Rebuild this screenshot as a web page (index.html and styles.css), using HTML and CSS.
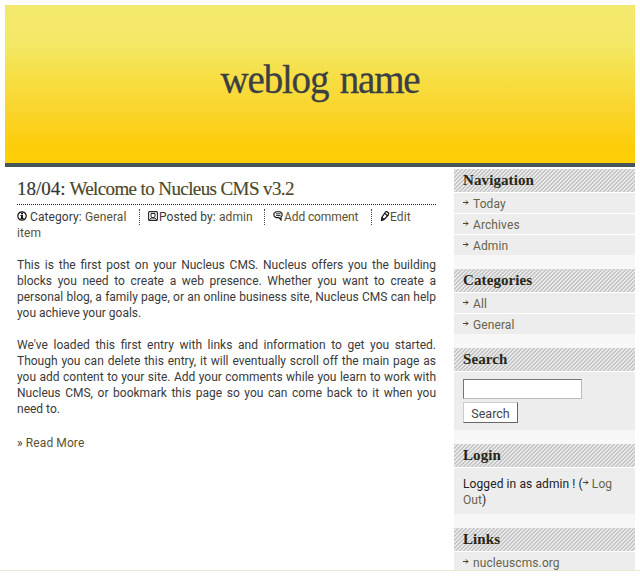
FILE: index.html
```
<!DOCTYPE html>
<html lang="en">
<head>
<meta charset="utf-8">
<title>weblog name</title>
<link rel="stylesheet" href="styles.css">
</head>
<body>
<svg class="defs" width="0" height="0">
  <symbol id="arrow" viewBox="0 0 6 5"><path d="M0 2.5h5M3 .5l2 2-2 2" fill="none" stroke="currentColor"/></symbol>
</svg>
<div class="page">
  <header class="banner"><h1>weblog name</h1></header>
  <div class="columns">
    <main class="content">
      <h2 class="title"><span>18/04:</span> <a>Welcome to Nucleus CMS v3.2</a></h2>
      <div class="meta">
        <span class="m1"><svg class="ic" viewBox="0 0 10 10"><circle cx="5" cy="5" r="4.2" fill="none" stroke="#111" stroke-width="1.2"/><path d="M4 1.8h2v1.5H4zM3.5 4H6v3.2h1V8H3.3v-.8H4V5h-.5z" fill="#111"/></svg><span>Category: <a>General</a></span></span>
        <span class="m2"><svg class="ic" viewBox="0 0 10 10"><rect x=".6" y=".6" width="8.8" height="8.8" rx="1" fill="none" stroke="#222" stroke-width="1.1"/><path d="M3 2.5h4v3.2L6 6.5H4l-1-.8zM1.5 8.8L3 7h4l1.5 1.8" fill="none" stroke="#222"/></svg><span>Posted by: <a>admin</a></span></span>
        <span class="m3"><svg class="ic" viewBox="0 0 10 10"><path d="M3 .7h4l2 1.5v2.6L8 6v3L6 6.6H3L1 5V2.2z" fill="none" stroke="#111" stroke-width="1.1"/><path d="M3 2.8h4.5M3 4.6h4.5" stroke="#111" stroke-width=".9"/></svg><a class="add">Add comment</a></span>
        <span class="m4"><svg class="ic" viewBox="0 0 10 10"><path d="M5.5 1l1.2-.5 2 1.5-.5 2.2-4 4.3L1.5 9.5l.3-3zM4.8 2.2l2.4 2.3M1.8 6.5l2.3 1.9" fill="none" stroke="#111" stroke-width="1.2"/><path d="M1.5 7.5v2h2z" fill="#111"/></svg><a class="ed">Edit</a></span>
        <a class="item">item</a>
      </div>
      <p><span>This is the first post on your Nucleus CMS. Nucleus offers you the building</span><span>blocks you need to create a web presence. Whether you want to create a</span><span>personal blog, a family page, or an online business site, Nucleus CMS can help</span><span class="end">you achieve your goals.</span></p>
      <p><span>We've loaded this first entry with links and information to get you started.</span><span>Though you can delete this entry, it will eventually scroll off the main page as</span><span>you add content to your site. Add your comments while you learn to work with</span><span>Nucleus CMS, or bookmark this page so you can come back to it when you</span><span class="end">need to.</span></p>
      <div class="more">» <a>Read More</a></div>
    </main>
    <aside class="side">
      <section><h3>Navigation</h3><ul><li><svg><use href="#arrow"/></svg><a>Today</a></li><li><svg><use href="#arrow"/></svg><a>Archives</a></li><li><svg><use href="#arrow"/></svg><a>Admin</a></li></ul></section>
      <section><h3>Categories</h3><ul><li><svg><use href="#arrow"/></svg><a>All</a></li><li><svg><use href="#arrow"/></svg><a>General</a></li></ul></section>
      <section><h3>Search</h3><form class="search"><input type="text" aria-label="Search"><button type="button">Search</button></form></section>
      <section><h3>Login</h3><div class="login">Logged in as admin ! (<svg><use href="#arrow"/></svg><a>Log<br>Out</a>)</div></section>
      <section><h3>Links</h3><ul><li><svg><use href="#arrow"/></svg><a>nucleuscms.org</a></li></ul></section>
    </aside>
  </div>
</div>
</body>
</html>
```
FILE: styles.css
```
* { box-sizing: border-box; }
body { margin: 0; background: #fff; color: #3a3a3a; font: 12px/16px Roboto, "Liberation Sans", sans-serif; letter-spacing: .1px; }
.defs { display: block; height: 0; }
h1, h2, h3, p, ul { margin: 0; padding: 0; }
a { color: #575133; }
.page { height: 571px; padding: 5px 5px 0; overflow: hidden; border-bottom: 1px solid #ebe8d5; }
.banner { height: 162px; border-bottom: 4px solid #475759; background: linear-gradient(#f3e96e 0%, #f3e867 24%, #f7df45 45%, #fad42a 68%, #fdcd09 90%, #ffcf06 100%); text-align: center; }
h1 { padding-top: 50px; font: 400 39px/50px "Liberation Serif", serif; letter-spacing: -1.2px; word-spacing: 3px; color: #3b3f45; -webkit-text-stroke: .3px; }
.columns { display: flex; justify-content: space-between; }
.content { width: 419px; margin-left: 12px; }
.title { height: 38px; padding-top: 9px; font: 400 19px/25px "Liberation Serif", serif; letter-spacing: -.6px; color: #333; border-bottom: 1px dotted #222; white-space: nowrap; -webkit-text-stroke: .15px; }
.title span { letter-spacing: 0; }
.title a { color: #4d4729; }
.meta { display: grid; grid-template-columns: 123px 125px 107px 64px; padding-top: 4px; margin-bottom: 16px; height: 36px; }
.meta > span { display: flex; align-items: center; height: 16px; white-space: nowrap; }
.m1, .m2, .m3 { border-right: 1px dotted #444; }
.m2, .m3, .m4 { padding-left: 8px; }
.ic { width: 10px; height: 10px; margin-right: 1px; flex: none; position: relative; top: -1px; }
.m1 .ic { margin-right: 3px; }
.m3 .add { letter-spacing: -.1px; }
.m4 .ed { margin-left: -1px; }
.item { height: 16px; }
p { margin-bottom: 16px; letter-spacing: 0; }
p span { display: block; height: 16px; white-space: nowrap; text-align: justify; text-align-last: justify; }
p .end { text-align-last: left; }
.more { padding-top: 2px; }
.side { width: 181px; height: 402px; margin-top: 2px; background: #f7f7f7; overflow: hidden; }
section { margin-bottom: 14px; }
h3 { height: 23px; padding-left: 9px; font: 700 15px/23px "Liberation Serif", serif; letter-spacing: .1px; color: #272514; background: repeating-linear-gradient(135deg, #c6c6c6 0, #c6c6c6 .7px, #e9e9e9 1.4px, #e9e9e9 2.1px, #c6c6c6 2.828px); }
ul { list-style: none; }
li { display: flex; align-items: center; height: 20px; margin-top: 1px; padding-left: 9px; background: #ededed; box-shadow: 0 -1px #fff; }
.side svg { width: 6px; height: 5px; margin-right: 4px; color: #4d4220; flex: none; }
li svg { position: relative; top: -1px; }
li a { color: #68634b; padding-top: 1px; }
.search, .login { margin-top: 1px; background: #ededed; box-shadow: 0 -1px #fff; }
.search { display: flex; flex-direction: column; align-items: flex-start; gap: 3px; height: 58px; padding: 7px 9px; }
input { width: 119px; height: 20px; padding: 0; border: 1px solid; border-color: #777 #bbb #bbb #777; background: #fff; }
button { width: 55px; height: 21px; padding: 2px 0 0; font: 12.5px/16px Roboto, sans-serif; color: #444; background: #fff; border: 1px solid; border-color: #ccc #666 #666 #ccc; }
.login { height: 46px; padding: 8px 9px 0; color: #222; white-space: nowrap; }
.login svg { vertical-align: 3px; margin-right: 3px; }
.login a { color: #68634b; }
```
